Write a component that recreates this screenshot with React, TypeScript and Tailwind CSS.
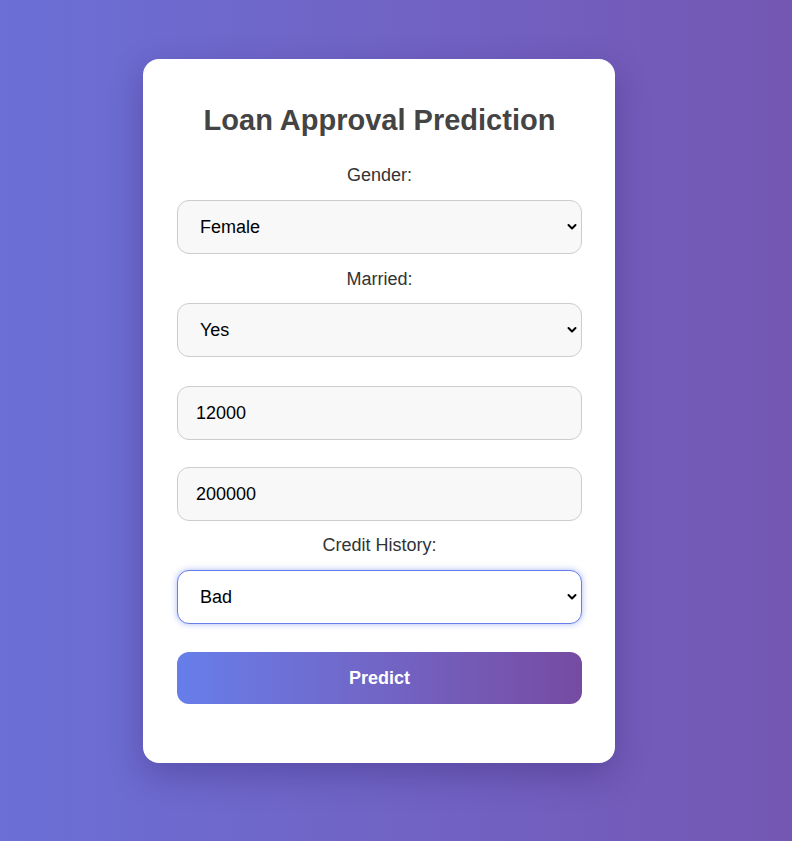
import React from "react";

const font = { fontFamily: '"Liberation Sans", Arial, sans-serif' };

const Chevron = () => (
    <svg className="pointer-events-none absolute right-[5px] top-1/2 -translate-y-1/2" width="10" height="7" viewBox="0 0 10 7" fill="none">
        <path d="M1.5 1.5 L5 5 L8.5 1.5" stroke="#000" strokeWidth="2" strokeLinecap="round" strokeLinejoin="round" />
    </svg>
);

type SelectProps = {
    value: string;
    options: string[];
    focused?: boolean;
    className?: string;
};

const Select: React.FC<SelectProps> = ({ value, options, focused, className }) => (
    <div className={"relative " + (className ?? "")}>
        <select
            defaultValue={value}
            style={font}
            className={
                "block w-full h-[54px] appearance-none rounded-[12px] border pl-[22px] pr-8 text-[18px] text-black outline-none " +
                (focused
                    ? "border-[#667eea] bg-white shadow-[0_0_6px_rgba(102,126,234,0.55)]"
                    : "border-[#cccccc] bg-[#f8f8f8]")
            }
        >
            {options.map((o) => (
                <option key={o}>{o}</option>
            ))}
        </select>
        <Chevron />
    </div>
);

const TextInput: React.FC<{ value: string; className?: string }> = ({ value, className }) => (
    <input
        type="text"
        defaultValue={value}
        style={font}
        className={
            "block w-full h-[54px] rounded-[12px] border border-[#cccccc] bg-[#f8f8f8] px-[18px] text-[18px] text-black outline-none " +
            (className ?? "")
        }
    />
);

export default function App() {
    return (
        <div
            style={font}
            className="min-h-screen h-[841px] w-full overflow-hidden bg-gradient-to-r from-[#6b6fd6] to-[#7457b3] pt-[59px]"
        >
            <div className="ml-[143px] w-[472px] h-[704px] rounded-[16px] bg-white pl-[34px] pr-[33px] pt-[45px] shadow-[0_12px_34px_rgba(40,20,90,0.3)]">
                <h2 className="text-center text-[29px] font-bold leading-[32px] text-[#444444]">Loan Approval Prediction</h2>

                <label className="mt-[30px] block text-center text-[18px] leading-[18px] text-[#333333]">Gender:</label>
                <Select value="Female" options={["Male", "Female"]} className="mt-[16px]" />

                <label className="mt-[16px] block text-center text-[18px] leading-[18px] text-[#333333]">Married:</label>
                <Select value="Yes" options={["Yes", "No"]} className="mt-[15px]" />

                <TextInput value="12000" className="mt-[29px]" />
                <TextInput value="200000" className="mt-[27px]" />

                <label className="mt-[15px] block text-center text-[18px] leading-[18px] text-[#333333]">Credit History:</label>
                <Select value="Bad" options={["Good", "Bad"]} focused className="mt-[16px]" />

                <button
                    style={font}
                    className="mt-[28px] block h-[52px] w-full rounded-[12px] bg-gradient-to-r from-[#667eea] to-[#764ba2] text-[18px] font-bold text-white"
                >
                    Predict
                </button>
            </div>
        </div>
    );
}
